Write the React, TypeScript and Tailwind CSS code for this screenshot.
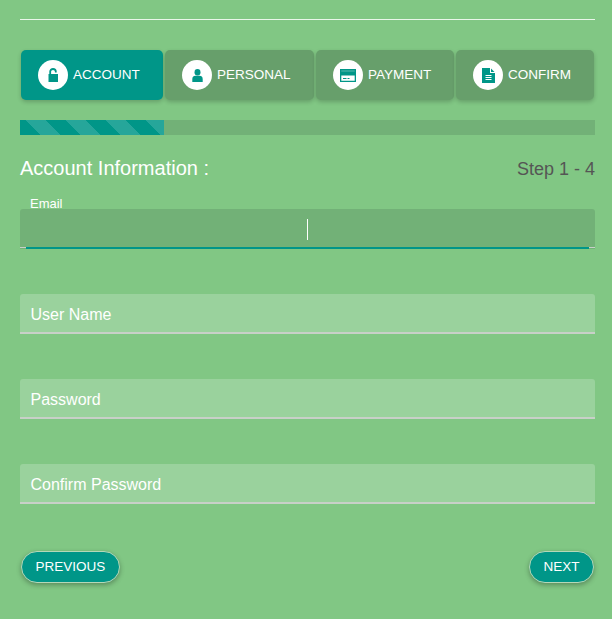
/**
 * Multi step signup form, account step.
 */

import type { ReactNode } from 'react'

const teal = 'text-[#009688]'

const UnlockIcon = () => (
  <svg viewBox="0 0 11 14" className={`w-[11px] h-[14px] ${teal}`} fill="currentColor">
    <path d="M0.500 6h9.500v8H0.500z" />
    <path d="M2.200 6.500V3.600C2.200 2 3.400 1 5 1s2.800 1 2.800 2.600V4.500" fill="none" stroke="currentColor" strokeWidth="1.800" />
  </svg>
)

const UserIcon = () => (
  <svg viewBox="0 0 11 13" className={`w-[11px] h-[13px] ${teal}`} fill="currentColor">
    <ellipse cx="5.500" cy="3.300" rx="3" ry="3.300" />
    <path d="M0.300 13v-3C0.300 8 1.800 6.800 3.300 6.800h4.400c1.500 0 3 1.200 3 3.200v3z" />
  </svg>
)

const CardIcon = () => (
  <svg viewBox="0 0 16 13" className={`w-4 h-[13px] ${teal}`} fill="currentColor">
    <path fillRule="evenodd" d="M0 0h16v13H0zM1.300 6.500v5.200h13.400V6.500z" />
    <path d="M1.300 1.500h13.400v1H1.300z" fill="#ffffff" opacity="0.35" />
    <path d="M3 9h3.500v1H3zM7.500 9h2v1h-2z" />
  </svg>
)

const FileIcon = () => (
  <svg viewBox="0 0 13 15" className={`w-[13px] h-[15px] ${teal}`} fill="currentColor">
    <path fillRule="evenodd" d="M0 0h8v5h5v10H0zM3.500 7v1h6V7zM3.500 9v1h6V9zM3.500 11v1h6v-1z" />
    <path d="M9 0.500L12.500 4H9z" />
  </svg>
)

interface StepTabProps {
  icon: ReactNode
  label: string
  active?: boolean
  className: string
}

function StepTab({ icon, label, active = false, className }: StepTabProps) {
  return (
    <div
      className={`h-[50px] flex items-center pl-[17px] gap-[5px] rounded-[5px] text-white text-[13.5px] shadow-[0_2px_4px_rgba(0,0,0,0.2)] ${
        active ? 'bg-[#009688]' : 'bg-[#679f6b]'
      } ${className}`}
    >
      <span className="w-[30px] h-[30px] rounded-full bg-white flex items-center justify-center">{icon}</span>
      <span className="pt-px">{label}</span>
    </div>
  )
}

function Field({ label }: { label: string }) {
  return (
    <div className="mt-[45px] h-[40px] rounded-t-[3px] bg-[#9ad29d] border-b-[2px] border-[#c8d0c8] px-[10.500px] pt-[3px] flex items-center text-white text-base">
      {label}
    </div>
  )
}

export default function App() {
  return (
    <div className="w-[612px] h-[619px] bg-[#81c784] pl-5 pr-[17px] pt-[19px] font-['Liberation_Sans',Arial,sans-serif] overflow-hidden">
      <div className="h-px bg-[#eaf6ea]" />

      <div className="mt-[30px] flex gap-[2px] px-px">
        <StepTab icon={<UnlockIcon />} label="ACCOUNT" active className="w-[142px]" />
        <StepTab icon={<UserIcon />} label="PERSONAL" className="w-[149px]" />
        <StepTab icon={<CardIcon />} label="PAYMENT" className="w-[138px]" />
        <StepTab icon={<FileIcon />} label="CONFIRM" className="w-[138px]" />
      </div>

      <div className="mt-5 h-[15px] bg-[#72b177]">
        <div className="h-full w-[144px] bg-[#009688] bg-[linear-gradient(45deg,rgba(255,255,255,0.15)_25%,transparent_25%,transparent_50%,rgba(255,255,255,0.15)_50%,rgba(255,255,255,0.15)_75%,transparent_75%,transparent)] bg-[length:40px_40px] bg-[position:6px_0]" />
      </div>

      <div className="mt-[21px] h-6 flex items-center justify-between">
        <h2 className="text-xl text-white font-normal">Account Information :</h2>
        <span className="text-lg text-[#555555] pt-px">Step 1 - 4</span>
      </div>

      <div className="relative mt-[29px] h-[40px] rounded-t-[3px] bg-[#72b177]">
        <span className="absolute left-[10px] -top-[13px] text-[13px] leading-[15px] text-white">Email</span>
        <span className="absolute left-[287px] top-[10px] h-[21px] w-px bg-white" />
        <span className="absolute left-0 right-0 bottom-[1px] h-px bg-[#c8d0c8]" />
        <span className="absolute left-[6px] right-[6px] bottom-0 h-[2px] bg-[#009688]" />
      </div>

      <Field label="User Name" />
      <Field label="Password" />
      <Field label="Confirm Password" />

      <div className="mt-[47px] flex justify-between px-px">
        <button className="h-8 w-[99px] rounded-full bg-[#009688] border border-[#b5d8b8] text-white text-[13.5px] shadow-[0_2px_5px_rgba(0,0,0,0.3)]">
          PREVIOUS
        </button>
        <button className="h-8 w-[65px] rounded-full bg-[#009688] border border-[#b5d8b8] text-white text-[13.5px] shadow-[0_2px_5px_rgba(0,0,0,0.3)]">
          NEXT
        </button>
      </div>
    </div>
  )
}
